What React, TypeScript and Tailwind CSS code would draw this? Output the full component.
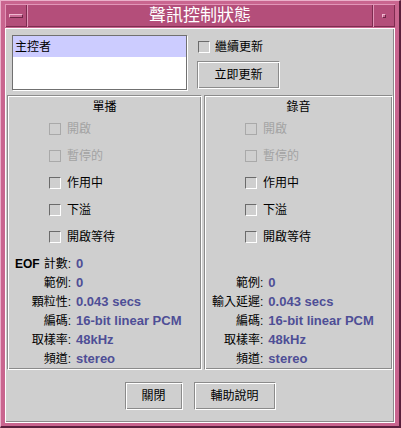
import React from "react";

const font = "font-['Liberation_Sans','Noto_Sans_CJK_TC','Noto_Sans_CJK_SC',sans-serif]";
const etched =
  "border border-t-[#8b8b8b] border-l-[#8b8b8b] border-b-white border-r-white shadow-[inset_1px_1px_0_#ffffff,inset_-1px_-1px_0_#8b8b8b]";

const CheckBox: React.FC<{ disabled?: boolean }> = ({ disabled }) => (
  <span
    className={
      disabled
        ? "block w-[12px] h-[12px] border border-[#a9a9a9] shrink-0"
        : "block w-[12px] h-[12px] border border-t-[#6b6b6b] border-l-[#6b6b6b] border-b-white border-r-white shrink-0"
    }
  />
);

const CheckRow: React.FC<{ label: string; disabled?: boolean }> = ({ label, disabled }) => (
  <div className="h-[27px] flex items-center gap-[6px]">
    <CheckBox disabled={disabled} />
    <span className={`text-[12px] leading-none ${disabled ? "text-[#a3a3a3]" : "text-black"}`}>{label}</span>
  </div>
);

const Info: React.FC<{ label: React.ReactNode; value: string }> = ({ label, value }) => (
  <>
    <div className="h-[19px] flex items-center justify-end text-[12px] text-black whitespace-nowrap">{label}:</div>
    <div className="h-[19px] flex items-center pl-[5px] text-[13px] font-bold text-[#4e4e96] whitespace-nowrap">{value}</div>
  </>
);

const Panel: React.FC<{ title: string; width: string; checkPad: string; first?: boolean }> = ({
  title,
  width,
  checkPad,
  first,
}) => (
  <div className={`${width} h-[275px] ${etched} flex flex-col`}>
    <div className="pt-[3px] h-[19px] text-center text-[12px] leading-[16px] text-black">{title}</div>
    <div className={`flex flex-col ${checkPad}`}>
      <CheckRow label="開啟" disabled />
      <CheckRow label="暫停的" disabled />
      <CheckRow label="作用中" />
      <CheckRow label="下溢" />
      <CheckRow label="開啟等待" />
    </div>
    <div className="mt-[4px] pl-[7px] grid grid-cols-[auto_1fr]">
      {first ? (
        <Info
          label={
            <>
              <span className="font-bold text-[12px] mr-[4px]">EOF</span>計數
            </>
          }
          value="0"
        />
      ) : (
        <>
          <div className="h-[19px]" />
          <div className="h-[19px]" />
        </>
      )}
      <Info label="範例" value="0" />
      <Info label={first ? "顆粒性" : "輸入延遲"} value="0.043 secs" />
      <Info label="編碼" value="16-bit linear PCM" />
      <Info label="取樣率" value="48kHz" />
      <Info label="頻道" value="stereo" />
    </div>
  </div>
);

const Button: React.FC<{ label: string; width: string }> = ({ label, width }) => (
  <button className={`${width} h-[28px] ${etched} bg-[#cfcfcf] text-[12px] text-black flex items-center justify-center`}>
    {label}
  </button>
);

const titleSeg = "shadow-[inset_1px_1px_0_#e296b8,inset_-1px_-1px_0_#7e2c50]";

export default function App() {
  return (
    <div
      className={`${font} w-[401px] h-[428px] flex flex-col bg-[#c9658f] border-t border-l border-r-2 border-b-2 border-t-[#eab0ca] border-l-[#eab0ca] border-r-[#5a1f3c] border-b-[#5a1f3c] pl-[4px] pr-[4px] pt-[3px] pb-[3px]`}
    >
      {/* title bar */}
      <div className="h-[23px] flex bg-[#b44e7a]">
        <div className={`w-[22px] h-full flex items-center justify-center ${titleSeg}`}>
          <span className="block w-[14px] h-[4px] bg-[#c96a94] border border-t-[#f0b8d0] border-l-[#f0b8d0] border-b-[#6e2646] border-r-[#6e2646]" />
        </div>
        <div className={`flex-1 h-full flex items-center justify-center text-white text-[17px] ${titleSeg}`}>
          聲訊控制狀態
        </div>
        <div className={`w-[22px] h-full flex items-center justify-center ${titleSeg}`}>
          <span className="block w-[4px] h-[4px] bg-[#c96a94] border border-t-[#f0b8d0] border-l-[#f0b8d0] border-b-[#6e2646] border-r-[#6e2646]" />
        </div>
      </div>

      {/* content */}
      <div className="mt-[1px] flex-1 flex flex-col bg-[#cfcfcf] shadow-[inset_0_1px_0_#ffffff,inset_1px_0_0_#ffffff,inset_0_-1px_0_#ffffff,inset_-1px_0_0_#ffffff,inset_0_-2px_0_#8b8b8b,inset_-2px_0_0_#8b8b8b]">
        <div className="pt-[7px] pl-[7px] flex h-[62px]">
          <div className="w-[175px] h-[55px] bg-white border border-[#707070] shadow-[1px_1px_0_#ffffff]">
            <div className="h-[21px] bg-[#ccccff] pl-[2px] flex items-center text-[12px] text-black">主控者</div>
          </div>
          <div className="ml-[10px] flex flex-col">
            <div className="mt-[6px] ml-[1px] flex items-center gap-[5px] h-[12px]">
              <CheckBox />
              <span className="text-[12px] leading-none text-black">繼續更新</span>
            </div>
            <div className="mt-[8px]">
              <Button label="立即更新" width="w-[83px]" />
            </div>
          </div>
        </div>

        <div className="mt-[5px] px-[2px] flex gap-[2px]">
          <Panel title="單播" width="w-[195px]" checkPad="pl-[41px]" first />
          <Panel title="錄音" width="w-[189px]" checkPad="pl-[40px]" />
        </div>

        <div className="mt-[12px] flex justify-center gap-[11px]">
          <Button label="關閉" width="w-[58px]" />
          <Button label="輔助說明" width="w-[82px]" />
        </div>
      </div>
    </div>
  );
}
